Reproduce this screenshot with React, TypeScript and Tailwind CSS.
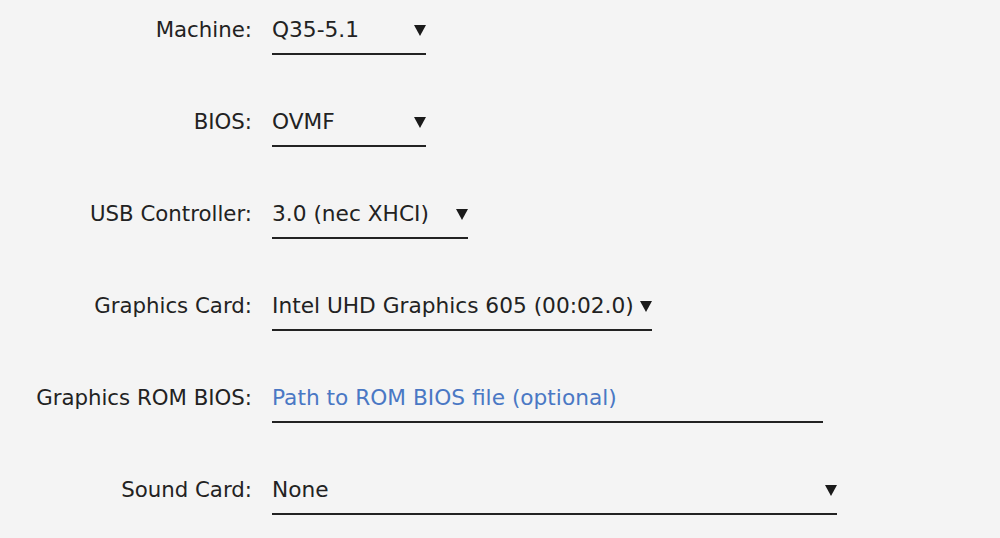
import React from "react";

function Arrow() {
  return (
    <svg width="12" height="11" viewBox="0 0 12 11" className="shrink-0">
      <polygon points="0,0 12,0 6,11" fill="#1a1a1a" />
    </svg>
  );
}

type Row = { label: string; value: string; width: number; select: boolean; placeholder?: boolean };

const rows: Row[] = [
  { label: "Machine:", value: "Q35-5.1", width: 154, select: true },
  { label: "BIOS:", value: "OVMF", width: 154, select: true },
  { label: "USB Controller:", value: "3.0 (nec XHCI)", width: 196, select: true },
  { label: "Graphics Card:", value: "Intel UHD Graphics 605 (00:02.0)", width: 380, select: true },
  { label: "Graphics ROM BIOS:", value: "Path to ROM BIOS file (optional)", width: 551, select: false, placeholder: true },
  { label: "Sound Card:", value: "None", width: 565, select: true },
];

export default function App() {
  return (
    <div
      className="w-[1000px] h-[538px] overflow-hidden bg-[#f4f4f4] text-[#222222] pt-[15px]"
      style={{ fontFamily: '"DejaVu Sans", sans-serif' }}
    >
      <div className="flex flex-col gap-[52px]">
        {rows.map((r) => (
          <div key={r.label} className="flex items-start">
            <div className="w-[252px] text-right text-[21.3px] leading-[30px] whitespace-nowrap">{r.label}</div>
            <div
              className="ml-[20px] border-b-2 border-[#222222] pb-[8px] flex items-center justify-between"
              style={{ width: r.width }}
            >
              <span
                className={
                  "text-[21.7px] leading-[30px] whitespace-nowrap " +
                  (r.placeholder ? "text-[#4a78c4]" : "text-[#222222]")
                }
              >
                {r.value}
              </span>
              {r.select && <Arrow />}
            </div>
          </div>
        ))}
      </div>
    </div>
  );
}
